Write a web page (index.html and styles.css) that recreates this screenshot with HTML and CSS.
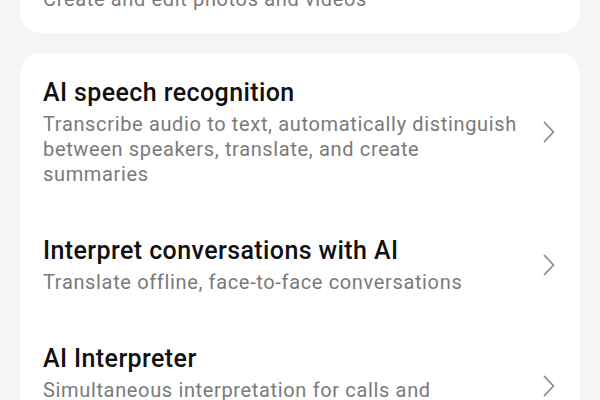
FILE: index.html
```html
<!DOCTYPE html>
<html lang="en">
<head>
  <meta charset="UTF-8">
  <title>AI features</title>
  <link rel="stylesheet" href="styles.css">
</head>
<body>
  <div class="card card-top">
    <div class="row">
      <div class="texto">
        <p class="sub">Create and edit photos and videos</p>
      </div>
    </div>
  </div>

  <div class="card">
    <div class="row">
      <div class="texto">
        <h2>AI speech recognition</h2>
        <p class="sub">Transcribe audio to text, automatically distinguish between speakers, translate, and create summaries</p>
      </div>
      <svg class="chevron" viewBox="0 0 12 22"><path d="M1.5 1.5 L10.5 11 L1.5 20.5"/></svg>
    </div>
    <div class="row">
      <div class="texto">
        <h2>Interpret conversations with AI</h2>
        <p class="sub">Translate offline, face-to-face conversations</p>
      </div>
      <svg class="chevron" viewBox="0 0 12 22"><path d="M1.5 1.5 L10.5 11 L1.5 20.5"/></svg>
    </div>
    <div class="row">
      <div class="texto">
        <h2>AI Interpreter</h2>
        <p class="sub">Simultaneous interpretation for calls and conversations</p>
      </div>
      <svg class="chevron" viewBox="0 0 12 22"><path d="M1.5 1.5 L10.5 11 L1.5 20.5"/></svg>
    </div>
  </div>
</body>
</html>
```

FILE: styles.css
```css
body {
  margin: 0;
  padding: 0 20px;
  background: #f5f5f5;
  font-family: 'Roboto', 'Noto Sans', sans-serif;
}

.card {
  background: #ffffff;
  border-radius: 22px;
  margin-bottom: 20px;
}

/* tarjeta cortada por arriba */
.card-top {
  margin-top: -57px;
  padding-top: 20px;
}

.row {
  display: flex;
  align-items: center;
  gap: 20px;
  padding: 24px 25px 24px 23px;
}

.card-top .row {
  padding-bottom: 21px;
}

.texto {
  flex: 1;
}

h2 {
  margin: 0 0 3px;
  font-size: 25px;
  line-height: 32px;
  font-weight: 500;
  letter-spacing: 0.4px;
  color: #111111;
}

.sub {
  margin: 0;
  font-size: 20px;
  line-height: 25px;
  letter-spacing: 0.65px;
  color: #7a7a7a;
}

.chevron {
  width: 12px;
  height: 22px;
  flex-shrink: 0;
  fill: none;
  stroke: #8a8a8a;
  stroke-width: 1.8;
  stroke-linecap: round;
  stroke-linejoin: round;
}
```
